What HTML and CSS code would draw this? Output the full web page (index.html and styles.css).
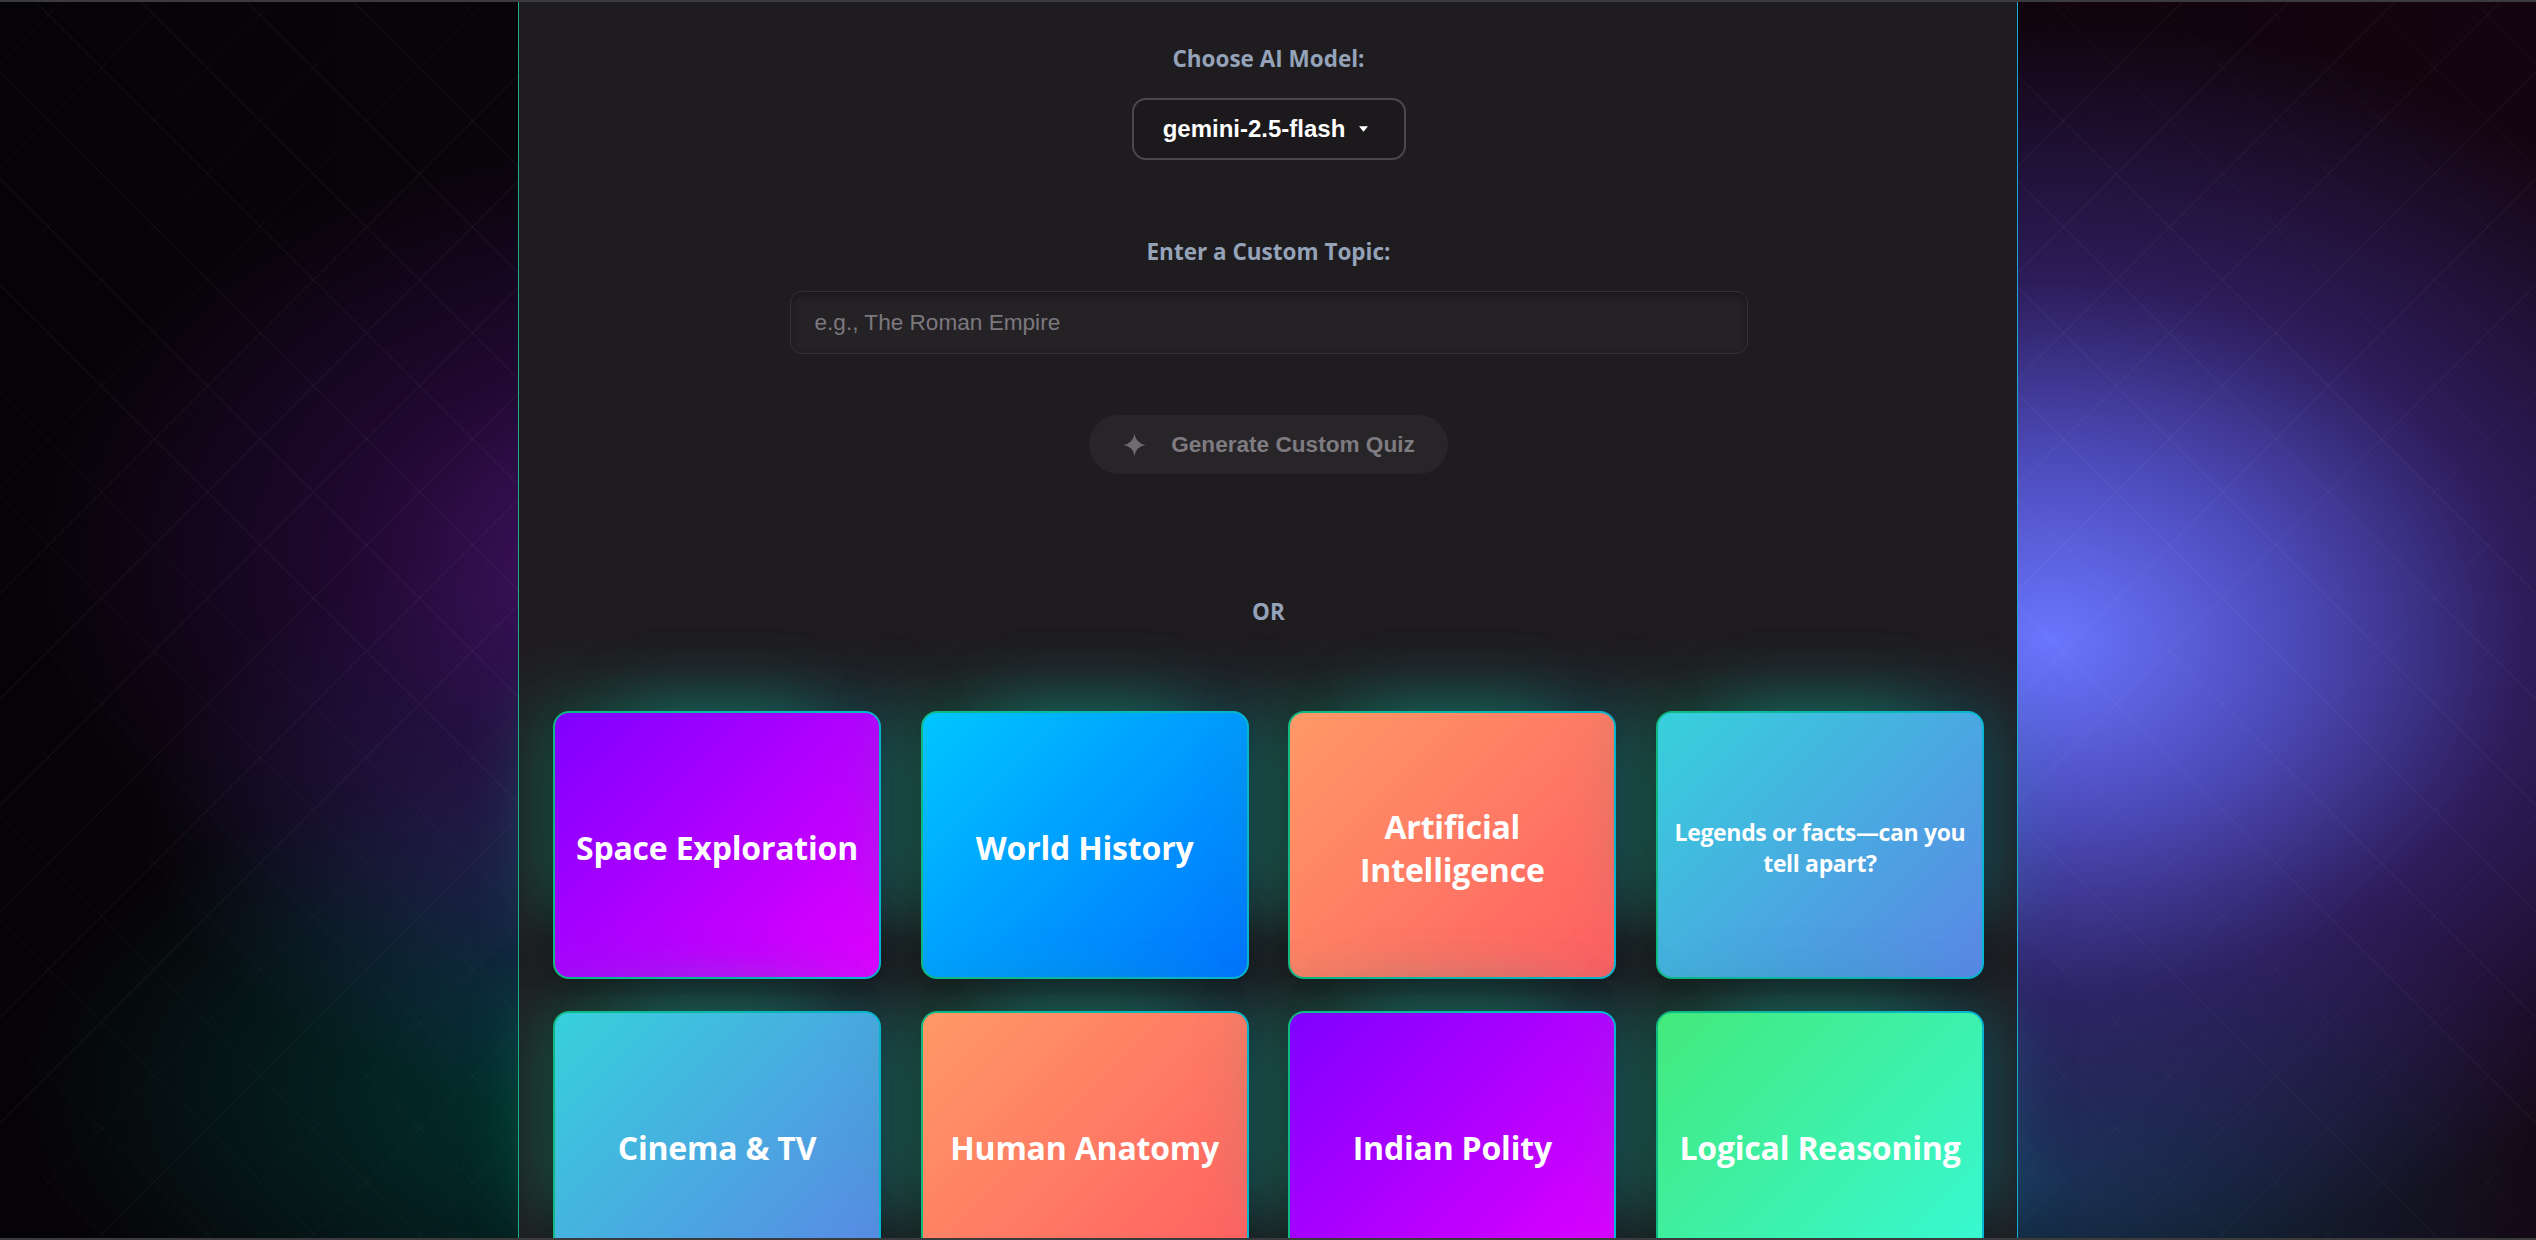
FILE: index.html
```html
<!DOCTYPE html>
<html lang="en">
<head>
<meta charset="utf-8">
<title>Quiz Generator</title>
<link rel="stylesheet" href="styles.css">
</head>
<body>
<main class="panel">
  <section class="field">
    <label class="field-label">Choose AI Model:</label>
    <button class="model-select" type="button">
      <span>gemini-2.5-flash</span>
      <svg class="caret" viewBox="0 0 10 6" aria-hidden="true"><path d="M0 0H10L5 6Z"/></svg>
    </button>
  </section>

  <section class="field field-topic">
    <label class="field-label" for="topic">Enter a Custom Topic:</label>
    <input id="topic" class="topic-input" type="text" placeholder="e.g., The Roman Empire">
  </section>

  <button class="generate" type="button">
    <svg class="sparkle" viewBox="0 0 24 24" aria-hidden="true"><path d="M12 1Q13.6 10.4 23 12Q13.6 13.6 12 23Q10.4 13.6 1 12Q10.4 10.4 12 1Z"/></svg>
    <span>Generate Custom Quiz</span>
  </button>

  <div class="or">OR</div>

  <div class="grid">
    <div class="card g-violet"><span>Space Exploration</span></div>
    <div class="card g-blue"><span>World History</span></div>
    <div class="card g-peach"><span>Artificial Intelligence</span></div>
    <div class="card g-sky card-long"><span>Legends or facts—can you tell apart?</span></div>
    <div class="card g-sky"><span>Cinema &amp; TV</span></div>
    <div class="card g-peach"><span>Human Anatomy</span></div>
    <div class="card g-violet"><span>Indian Polity</span></div>
    <div class="card g-green"><span>Logical Reasoning</span></div>
  </div>
</main>
</body>
</html>
```

FILE: styles.css
```css
html, body {
  margin: 0;
  padding: 0;
}

body {
  min-height: 100vh;
  font-family: "Open Sans", "Noto Sans", sans-serif;
  background-color: #070307;
  background-image:
    repeating-linear-gradient(45deg, rgba(255,255,255,0.032) 0 1px, transparent 1px 75px),
    repeating-linear-gradient(-45deg, rgba(255,255,255,0.032) 0 1px, transparent 1px 75px),
    radial-gradient(ellipse 820px 620px at 2050px 640px, rgba(106,118,255,1) 0%, rgba(86,86,214,0.85) 30%, rgba(62,44,140,0.6) 58%, rgba(40,15,70,0) 100%),
    radial-gradient(ellipse 560px 330px at 2040px 1180px, rgba(20,70,100,0.7) 0%, rgba(20,50,80,0) 100%),
    radial-gradient(ellipse 620px 430px at 650px 560px, rgba(72,20,110,0.95) 0%, rgba(50,12,80,0.55) 50%, rgba(30,5,40,0) 100%),
    radial-gradient(ellipse 540px 300px at 680px 820px, rgba(40,55,120,0.7) 0%, rgba(30,40,90,0) 100%),
    radial-gradient(ellipse 640px 340px at 660px 1090px, rgba(0,62,58,0.95) 0%, rgba(0,40,40,0) 100%),
    linear-gradient(90deg, #060306 0%, #0a0409 40%, #14040f 100%);
  background-attachment: fixed;
}

body::after {
  content: "";
  position: fixed;
  inset: 0;
  border-top: 2px solid #3b3b3d;
  border-bottom: 2px solid #3b3b3d;
  pointer-events: none;
}

.panel {
  box-sizing: border-box;
  width: 1500px;
  margin: 0 auto;
  min-height: 1400px;
  padding: 44px 33px 60px 34px;
  background: #1f1c20;
  border-style: solid;
  border-width: 0 1px;
  border-image: linear-gradient(90deg, #1aae8a, #17a9cf) 1;
  display: flex;
  flex-direction: column;
  align-items: center;
}

.field {
  display: flex;
  flex-direction: column;
  align-items: center;
  width: 100%;
}

.field-label {
  font-size: 22.5px;
  line-height: 30px;
  font-weight: 700;
  color: #94a3b8;
  margin-bottom: 24px;
}

.model-select {
  box-sizing: border-box;
  width: 274px;
  height: 62px;
  display: flex;
  align-items: center;
  justify-content: center;
  gap: 14px;
  padding: 0 6px 0 0;
  background: #1b191c;
  border: 2px solid #4a484c;
  border-radius: 14px;
  color: #ffffff;
  font-family: "Liberation Sans", Arial, sans-serif;
  font-weight: 700;
  font-size: 24px;
}

.caret {
  width: 9px;
  height: 6px;
  fill: #ffffff;
}

.field-topic {
  margin-top: 77px;
}

.topic-input {
  box-sizing: border-box;
  width: 958px;
  height: 63px;
  padding: 0 24px;
  background: #252226;
  border: 1px solid #313036;
  border-radius: 12px;
  box-shadow: inset 0 3px 8px rgba(0,0,0,0.35);
  color: #e5e5e5;
  font-family: "Liberation Sans", Arial, sans-serif;
  font-size: 22.6px;
  outline: none;
}

.topic-input::placeholder {
  color: #7b787e;
}

.generate {
  margin-top: 61px;
  height: 59px;
  display: flex;
  align-items: center;
  gap: 24px;
  padding: 0 33px;
  background: #282529;
  border: none;
  border-radius: 30px;
  color: #7e7b81;
  font-family: "Liberation Sans", Arial, sans-serif;
  font-weight: 700;
  font-size: 22.6px;
}

.sparkle {
  width: 25px;
  height: 24px;
  fill: #6e6b71;
}

.or {
  margin-top: 123px;
  font-size: 22.5px;
  line-height: 30px;
  font-weight: 700;
  color: #94a3b8;
}

.grid {
  margin-top: 84px;
  width: 100%;
  display: grid;
  grid-template-columns: repeat(4, 1fr);
  grid-auto-rows: 268px;
  column-gap: 39.67px;
  row-gap: 32px;
}

.card {
  box-sizing: border-box;
  display: flex;
  align-items: center;
  justify-content: center;
  padding: 6px 16px 0;
  border: 2px solid transparent;
  border-radius: 16px;
  color: #ffffff;
  font-size: 32px;
  line-height: 1.35;
  letter-spacing: -0.2px;
  font-weight: 700;
  text-align: center;
  box-shadow:
    -45px -34px 64px -28px rgba(20,170,120,0.38),
    45px -34px 64px -28px rgba(20,160,180,0.38),
    0 8px 30px rgba(0,0,0,0.35);
}

.card-long {
  font-size: 23px;
  line-height: 1.36;
  letter-spacing: -0.35px;
}

.g-violet {
  background: linear-gradient(135deg, #7f00ff, #e100ff) padding-box, linear-gradient(90deg, #10b981, #06b6d4) border-box;
}
.g-blue {
  background: linear-gradient(135deg, #00c6ff, #0072ff) padding-box, linear-gradient(90deg, #10b981, #06b6d4) border-box;
}
.g-peach {
  background: linear-gradient(135deg, #ff9966, #ff5e62) padding-box, linear-gradient(90deg, #10b981, #06b6d4) border-box;
}
.g-sky {
  background: linear-gradient(135deg, #36d1dc, #5b86e5) padding-box, linear-gradient(90deg, #10b981, #06b6d4) border-box;
}
.g-green {
  background: linear-gradient(135deg, #43e97b, #38f9d7) padding-box, linear-gradient(90deg, #10b981, #06b6d4) border-box;
}
```
